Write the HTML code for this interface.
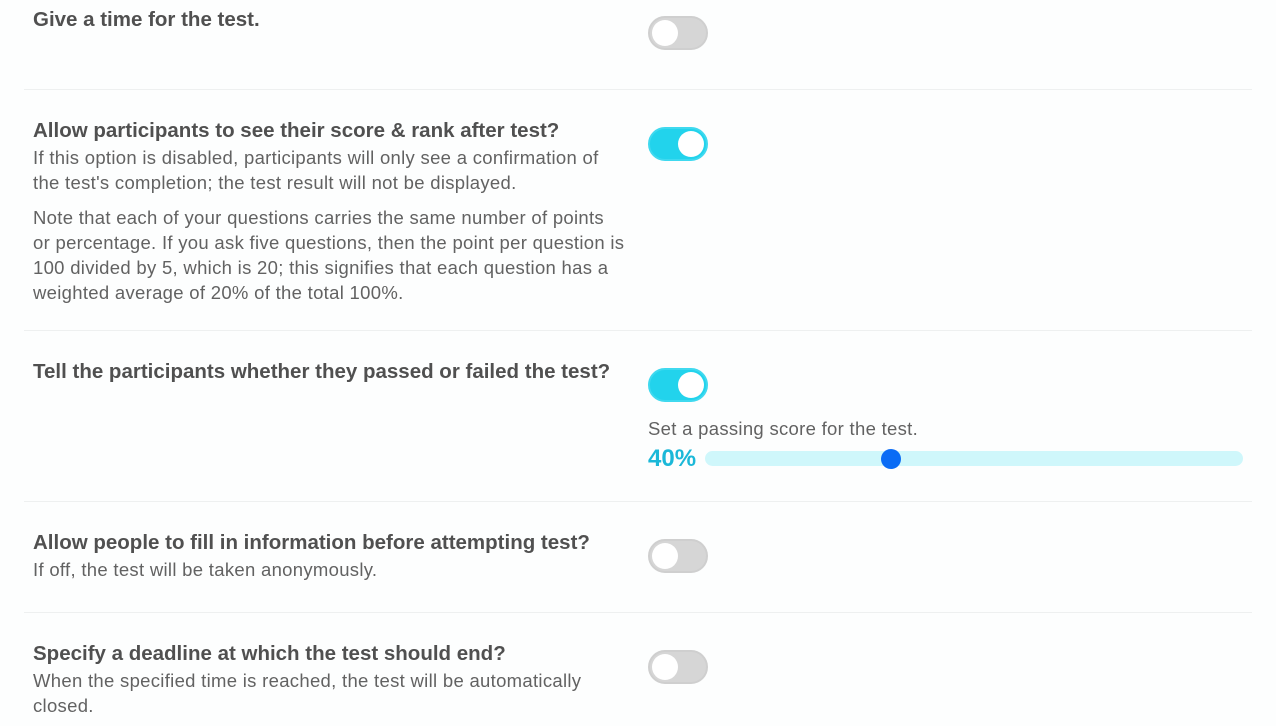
<!DOCTYPE html>
<html><head><style>
body{margin:0;width:1276px;height:726px;background:#fdfefe;font-family:"Liberation Sans",sans-serif;position:relative;overflow:hidden;color:#555}
.t{position:absolute;left:33px;font-size:20.5px;font-weight:bold;color:#505050;letter-spacing:0;white-space:nowrap}
.p{position:absolute;left:33px;font-size:18.5px;color:#626262;line-height:25px;width:592px;letter-spacing:0.3px}
.hr{position:absolute;left:24px;width:1228px;height:1px;background:#eef0f0}
.tg{position:absolute;left:648px;width:56px;height:30px;border-radius:17px;border:2px solid #cfcfcf;background:#d6d6d6}
.tg::after{content:"";position:absolute;top:2px;left:2px;width:26px;height:26px;border-radius:50%;background:#fff}
.on{background:#22d3ec;border-color:#3fd9ef}
.on::after{left:28px}
</style></head><body>
<div class="t" style="top:8px">Give a time for the test.</div>
<div class="tg" style="top:16px"></div>
<div class="hr" style="top:89px"></div>

<div class="t" style="top:119px">Allow participants to see their score &amp; rank after test?</div>
<div class="p" style="top:145px">If this option is disabled, participants will only see a confirmation of the test's completion; the test result will not be displayed.</div>
<div class="p" style="top:205px">Note that each of your questions carries the same number of points or percentage. If you ask five questions, then the point per question is 100 divided by 5, which is 20; this signifies that each question has a weighted average of 20% of the total 100%.</div>
<div class="tg on" style="top:127px"></div>
<div class="hr" style="top:330px"></div>

<div class="t" style="top:360px">Tell the participants whether they passed or failed the test?</div>
<div class="tg on" style="top:368px"></div>
<div class="p" style="top:416px;left:648px">Set a passing score for the test.</div>
<div style="position:absolute;left:648px;top:445px;font-size:24px;font-weight:bold;color:#1bb8d8">40%</div>
<div style="position:absolute;left:705px;top:451px;width:538px;height:15px;border-radius:8px;background:#cff7fb"></div>
<div style="position:absolute;left:881px;top:449px;width:20px;height:20px;border-radius:50%;background:#0a6cf5"></div>
<div class="hr" style="top:501px"></div>

<div class="t" style="top:531px">Allow people to fill in information before attempting test?</div>
<div class="p" style="top:557px">If off, the test will be taken anonymously.</div>
<div class="tg" style="top:539px"></div>
<div class="hr" style="top:612px"></div>

<div class="t" style="top:642px">Specify a deadline at which the test should end?</div>
<div class="p" style="top:668px;width:570px">When the specified time is reached, the test will be automatically closed.</div>
<div class="tg" style="top:650px"></div>
</body></html>
